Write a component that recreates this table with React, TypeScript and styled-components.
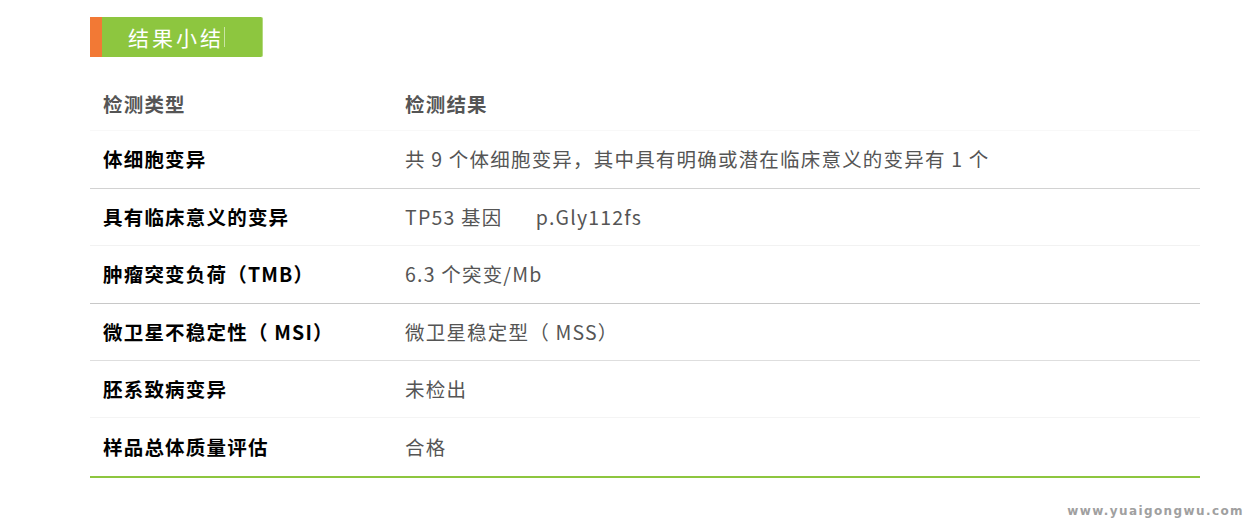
import styled, { createGlobalStyle } from 'styled-components';

const GlobalStyle = createGlobalStyle`
  body {
    margin: 0;
    background: #fff;
    font-family: "Noto Sans CJK SC", "Noto Sans", sans-serif;
  }
`;

const Page = styled.div`
  width: 1251px;
  height: 523px;
  display: flex;
  flex-direction: column;
  padding: 17px 0 0 90px;
  box-sizing: border-box;
`;

const TitleBar = styled.div`
  display: flex;
  height: 40px;
  width: 173px;
`;

const TitleMark = styled.div`
  width: 12px;
  background: #f27935;
`;

const TitleBox = styled.div`
  flex: 1;
  background: #8dc63f;
  display: flex;
  align-items: center;
  padding-left: 26px;
  border-right: 1px solid #b3d97e;
  border-radius: 0 2px 2px 0;
  color: #fff;
  font-size: 21px;
  letter-spacing: 3px;
  line-height: 1;
`;

const Caret = styled.span`
  display: inline-block;
  width: 1px;
  height: 20px;
  background: #c9e4a4;
`;

const Table = styled.div`
  width: 1110px;
  margin-top: 17px;
  border-bottom: 2px solid #8dc63f;
`;

const Row = styled.div<{ $line: string }>`
  display: grid;
  grid-template-columns: 302px 1fr;
  height: 57.4px;
  box-sizing: border-box;
  align-items: center;
  border-bottom: 1px solid ${p => p.$line};
  &:last-child {
    border-bottom: none;
  }
`;

const Cell = styled.div<{ $kind: 'head' | 'label' | 'value' }>`
  padding-left: 13px;
  font-size: 19.5px;
  letter-spacing: 1.2px;
  line-height: 1;
  margin-top: ${p => (p.$kind === 'head' ? '4px' : '-1px')};
  color: ${p => (p.$kind === 'label' ? '#000' : '#555')};
  font-weight: ${p => (p.$kind === 'value' ? 400 : 700)};
  white-space: pre;
`;

const Footer = styled.div`
  flex: 1;
  display: flex;
  justify-content: flex-end;
  align-items: flex-end;
  padding: 0 7px 5px 0;
`;

const Watermark = styled.span`
  font-family: "DejaVu Sans", sans-serif;
  font-weight: 700;
  font-size: 12px;
  letter-spacing: 1.4px;
  color: #a0a0a0;
`;

const rows = [
  { label: '体细胞变异', value: '共 9 个体细胞变异，其中具有明确或潜在临床意义的变异有 1 个', line: '#d2d2d2' },
  { label: '具有临床意义的变异', value: 'TP53 基因      p.Gly112fs', line: '#f2f2f2' },
  { label: '肿瘤突变负荷（TMB）', value: '6.3 个突变/Mb', line: '#c8c8c8' },
  { label: '微卫星不稳定性（ MSI）', value: '微卫星稳定型（ MSS）', line: '#dedede' },
  { label: '胚系致病变异', value: '未检出', line: '#f4f4f4' },
  { label: '样品总体质量评估', value: '合格', line: '#ffffff' },
];

export default function App() {
  return (
    <>
      <GlobalStyle />
      <Page>
        <TitleBar>
          <TitleMark />
          <TitleBox>
            结果小结
            <Caret />
          </TitleBox>
        </TitleBar>
        <Table>
          <Row $line="#f8f8f8">
            <Cell $kind="head">检测类型</Cell>
            <Cell $kind="head">检测结果</Cell>
          </Row>
          {rows.map(r => (
            <Row key={r.label} $line={r.line}>
              <Cell $kind="label">{r.label}</Cell>
              <Cell $kind="value">{r.value}</Cell>
            </Row>
          ))}
        </Table>
        <Footer>
          <Watermark>www.yuaigongwu.com</Watermark>
        </Footer>
      </Page>
    </>
  );
}
